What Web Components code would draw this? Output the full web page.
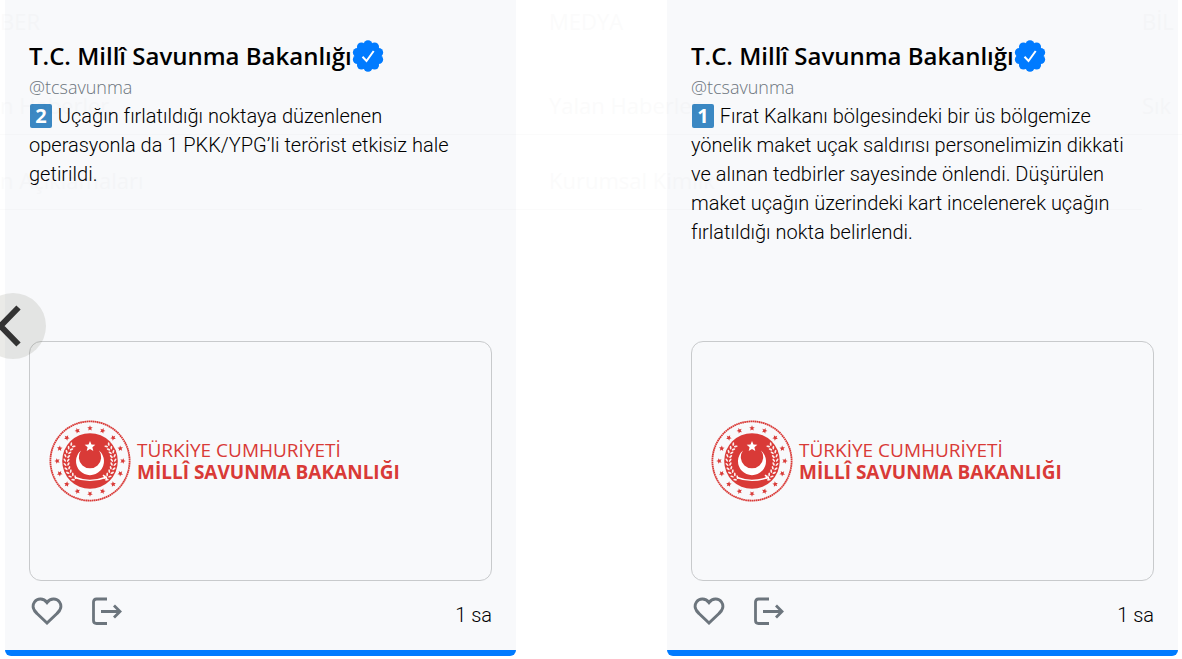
<!DOCTYPE html>
<html lang="tr">
<head>
<meta charset="utf-8">
<title>T.C. Millî Savunma Bakanlığı</title>
<style>
body { margin: 0; background: #fff; color: #000; font-family: "Open Sans", "Noto Sans", sans-serif; font-weight: 300; overflow: hidden; }
</style>
</head>
<body>
<news-carousel>
  <post-card name="T.C. Millî Savunma Bakanlığı" handle="@tcsavunma" time="1 sa">
    <number-key>2</number-key> Uçağın fırlatıldığı noktaya düzenlenen<br>operasyonla da 1 PKK/YPG’li terörist etkisiz hale<br>getirildi.
  </post-card>
  <post-card name="T.C. Millî Savunma Bakanlığı" handle="@tcsavunma" time="1 sa">
    <number-key>1</number-key> Fırat Kalkanı bölgesindeki bir üs bölgemize<br>yönelik maket uçak saldırısı personelimizin dikkati<br>ve alınan tedbirler sayesinde önlendi. Düşürülen<br>maket uçağın üzerindeki kart incelenerek uçağın<br>fırlatıldığı nokta belirlendi.
  </post-card>
</news-carousel>
<script>
class NumberKey extends HTMLElement {
  constructor() {
    super();
    this.attachShadow({ mode: "open" }).innerHTML = `
      <style>
        :host { display: inline-flex; align-items: center; justify-content: center; width: 22px; height: 24px; margin: -4px 1px 0; border-radius: 2px;
          background: #3b88c3; color: #fff; font: 700 20px/24px "Open Sans", sans-serif; vertical-align: middle; }
      </style><slot></slot>`;
  }
}
customElements.define("number-key", NumberKey);

class VerifiedBadge extends HTMLElement {
  constructor() {
    super();
    let lobes = "";
    for (let i = 0; i < 10; i++) {
      const a = (i * 36 - 90) * Math.PI / 180;
      lobes += `<circle cx="${(16 + 11.2 * Math.cos(a)).toFixed(2)}" cy="${(16 + 11.2 * Math.sin(a)).toFixed(2)}" r="4.5"/>`;
    }
    this.attachShadow({ mode: "open" }).innerHTML = `
      <style>:host { display: block; width: 32px; height: 32px; } svg { display: block; }</style>
      <svg width="32" height="32" viewBox="0 0 32 32" role="img" aria-label="Onaylı hesap">
        <g fill="#007bff"><circle cx="16" cy="16" r="13"/>${lobes}</g>
        <path d="M10.5 16.8l4 4.2 7.2-10" fill="none" stroke="#fff" stroke-width="2"/>
      </svg>`;
  }
}
customElements.define("verified-badge", VerifiedBadge);

class MinistryLogo extends HTMLElement {
  constructor() {
    super();
    const star = (x, y, r, turn) => {
      const p = [];
      for (let i = 0; i < 10; i++) {
        const a = (turn + i * 36 - 90) * Math.PI / 180, q = i % 2 ? r * 0.45 : r;
        p.push((x + q * Math.cos(a)).toFixed(2) + "," + (y + q * Math.sin(a)).toFixed(2));
      }
      return `<polygon points="${p.join(" ")}"/>`;
    };
    let ring = "", leaves = "";
    for (let i = 0; i < 16; i++) {
      const a = (i * 22.5 - 90) * Math.PI / 180;
      ring += star(41 + 32.8 * Math.cos(a), 41 + 32.8 * Math.sin(a), 2.9, i * 22.5);
    }
    for (let i = 0; i < 10; i++) {
      for (const side of [-1, 1]) {
        const deg = 48 - i * 10, a = deg * Math.PI / 180;
        for (const off of [-1.7, 1.7]) {
          const x = (41 + side * (23.5 + off) * Math.cos(a)).toFixed(2), y = (41 + (23.5 + off) * Math.sin(a)).toFixed(2);
          leaves += `<ellipse cx="${x}" cy="${y}" rx="0.9" ry="1.9" transform="rotate(${side * (deg + (off > 0 ? 35 : -35))} ${x} ${y})"/>`;
        }
      }
    }
    this.attachShadow({ mode: "open" }).innerHTML = `
      <style>
        :host { display: flex; align-items: center; gap: 6px; color: #d93a37; }
        svg { display: block; flex: none; }
        p { margin: 0; white-space: nowrap; font-size: 19px; line-height: 22px; font-weight: 400; }
        .ministry { font-weight: 700; }
      </style>
      <svg width="82" height="82" viewBox="0 0 82 82" aria-hidden="true">
        <circle cx="41" cy="41" r="39.6" fill="none" stroke="#d93a37" stroke-width="1.8" stroke-dasharray="1.7 .4"/>
        <g fill="#d93a37">${ring}<circle cx="41" cy="41" r="27.8"/></g>
        <g fill="#fbeeee">${leaves}</g>
        <path fill="#fff" fill-rule="evenodd" d="M32 30.500a14 14 0 1 0 18 0a11.200 11.200 0 1 1-18 0z"/>
        <g fill="#fff">${star(41, 26.5, 5.6, 0)}</g>
        <path d="M26 57.500q15 6 32-.500M54 55l4 4" fill="none" stroke="#fff" stroke-width="1.4"/>
      </svg>
      <div><p>TÜRKİYE CUMHURİYETİ</p><p class="ministry">MİLLÎ SAVUNMA BAKANLIĞI</p></div>`;
  }
}
customElements.define("ministry-logo", MinistryLogo);

class PostCard extends HTMLElement {
  constructor() {
    super();
    this.attachShadow({ mode: "open" }).innerHTML = `
      <style>
        :host { display: block; box-sizing: border-box; padding: 40px 24px 23px; background: #f8f9fb; border-bottom: 6px solid #007bff; border-radius: 0 0 6px 6px; }
        header { display: flex; align-items: center; height: 32px; }
        h2 { margin: 0; font-size: 24px; line-height: 32px; font-weight: 600; white-space: nowrap; }
        .handle { display: block; width: fit-content; color: #6c757d; text-decoration: none; font-size: 18px; line-height: 30px; }
        .text { margin: 0; min-height: 239px; font-family: Roboto, sans-serif; font-size: 20px; line-height: 29px; white-space: nowrap; }
        .media { display: flex; align-items: center; box-sizing: border-box; height: 240px; padding: 0 19px; border: 1px solid #c8cacc; border-radius: 12px; }
        footer { display: flex; align-items: center; gap: 28px; margin-top: 14px; padding-left: 2px; }
        button { display: block; width: 32px; height: 32px; padding: 0; border: 0; background: none; color: #6c757d; }
        button svg { display: block; }
        time { margin: 8px 0 0 auto; font-family: Roboto, sans-serif; font-size: 20px; line-height: 24px; }
      </style>
      <header><h2></h2><verified-badge></verified-badge></header>
      <a class="handle" href="#"></a>
      <p class="text"><slot></slot></p>
      <div class="media"><ministry-logo></ministry-logo></div>
      <footer>
        <button type="button" aria-label="Beğen"><svg width="32" height="32" viewBox="0 0 32 32" fill="none" stroke="currentColor" stroke-width="3"><path d="M16 7.500C12.500 3 6.500 2.800 3.500 7C.8 11 2.500 15.500 6 18.500L16 28L26 18.500C29.500 15.500 31.200 11 28.500 7C25.500 2.800 19.500 3 16 7.500Z"/></svg></button>
        <button type="button" aria-label="Paylaş"><svg width="32" height="32" viewBox="0 0 32 32" fill="none" stroke="currentColor" stroke-width="2.800"><path d="M16 4H5.500Q2.500 4 2.500 7V25.500Q2.500 28.500 5.500 28.500H16M10 16.500H29M23 10.500l6 6-6 6"/></svg></button>
        <time></time>
      </footer>`;
  }
  connectedCallback() {
    const r = this.shadowRoot;
    r.querySelector("h2").textContent = this.getAttribute("name");
    r.querySelector(".handle").textContent = this.getAttribute("handle");
    r.querySelector("time").textContent = this.getAttribute("time");
  }
}
customElements.define("post-card", PostCard);

class GhostMenu extends HTMLElement {
  constructor() {
    super();
    this.attachShadow({ mode: "open" }).innerHTML = `
      <style>
        :host { display: grid; grid-template-columns: 549px 593px 1fr; opacity: .01; pointer-events: none; overflow: hidden; font-weight: 400; white-space: nowrap; }
        h3 { margin: 6px 0 40px; font-size: 22px; line-height: 30px; font-weight: 400; }
        p { margin: 0 0 16px; padding: 14px 0; font-size: 22px; line-height: 30px; border-bottom: 1px solid #000; }
      </style>
      <section><h3>BER</h3><p>n Haberler</p><p>n Açıklamaları</p></section>
      <section><h3>MEDYA</h3><p>Yalan Haberler</p><p>Kurumsal Kimlik</p></section>
      <section><h3>BİL</h3><p>Sık</p></section>`;
  }
}
customElements.define("ghost-menu", GhostMenu);

class NewsCarousel extends HTMLElement {
  constructor() {
    super();
    this.attachShadow({ mode: "open" }).innerHTML = `
      <style>
        :host { display: grid; grid-template-columns: 1fr 1fr; column-gap: 151px; padding: 0 4px 3px 5px; position: relative; }
        ghost-menu { position: absolute; inset: 0; }
        button { position: absolute; left: -20px; top: 293px; width: 66px; height: 66px; padding: 0; border: 0; border-radius: 50%; background: rgba(60, 60, 40, .11); }
        svg { display: block; }
      </style>
      <slot></slot>
      <ghost-menu></ghost-menu>
      <button type="button" aria-label="Önceki"><svg width="66" height="66" viewBox="0 0 66 66" fill="none" stroke="#333" stroke-width="6"><path d="M38.500 14.500L20.500 33L38.500 51.500"/></svg></button>`;
  }
}
customElements.define("news-carousel", NewsCarousel);
</script>
</body>
</html>
